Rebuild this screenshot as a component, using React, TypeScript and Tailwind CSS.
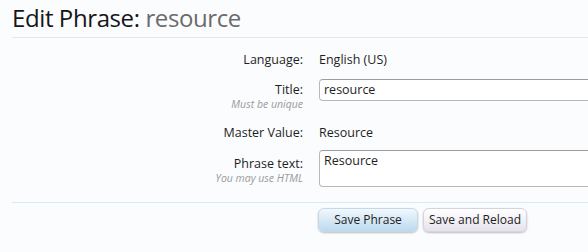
import React from "react";

export default function App() {
  const font = { fontFamily: '"Open Sans", "Noto Sans", sans-serif' };
  return (
    <div className="w-[588px] h-[252px] bg-[#fbfcfe] overflow-hidden" style={font}>
      <div className="pl-[12px]">
        <h1 className="pt-[3px] h-[37px] text-[24px] leading-[30px] text-[#161616] tracking-[-0.4px] whitespace-nowrap">
          Edit Phrase: <span className="text-[#6b6b6b]">resource</span>
        </h1>
        <div className="h-px bg-[#e2e8ef]" />
        <div className="grid grid-cols-[291px_300px] gap-x-[16px] text-[12.5px] text-[#1e1e1e] pt-[13px]">
          <div className="text-right leading-[18px]">Language:</div>
          <div className="leading-[18px]">English (US)</div>

          <div className="text-right pt-[13px]">
            <div className="leading-[16px]">Title:</div>
            <div className="text-[10.5px] italic text-[#9a9a9a] leading-[12px]">Must be unique</div>
          </div>
          <div className="pt-[10px]">
            <div className="h-[22px] border border-[#b8b8b8] border-t-[#9c9c9c] rounded-[4px] bg-white pl-[4px] leading-[20px]">
              resource
            </div>
          </div>

          <div className="text-right leading-[18px] pt-[14px]">Master Value:</div>
          <div className="leading-[18px] pt-[14px]">Resource</div>

          <div className="text-right pt-[14px]">
            <div className="leading-[16px]">Phrase text:</div>
            <div className="text-[10.5px] italic text-[#9a9a9a] leading-[12px]">You may use HTML</div>
          </div>
          <div className="pt-[8px]">
            <div className="h-[37px] border border-[#b8b8b8] border-t-[#9c9c9c] rounded-[4px] bg-white pl-[4px] pt-[1px] leading-[18px]">
              Resource
            </div>
          </div>
        </div>
        <div className="h-px bg-[#d6ecf5] mt-[15px]" />
        <div className="flex gap-[5px] pl-[306px] pt-[5px]">
          <button className="h-[24px] w-[100px] rounded-[6px] text-[12px] text-[#222] bg-gradient-to-b from-[#f2f8fd] to-[#bcd9ef] border border-[#c4d8e8] shadow-[0_1px_2px_rgba(0,0,0,0.25)]">
            Save Phrase
          </button>
          <button className="h-[24px] w-[104px] rounded-[6px] text-[12px] text-[#222] bg-gradient-to-b from-[#ffffff] to-[#e6e2ee] border border-[#d6d2de] shadow-[0_1px_2px_rgba(0,0,0,0.25)]">
            Save and Reload
          </button>
        </div>
      </div>
    </div>
  );
}
